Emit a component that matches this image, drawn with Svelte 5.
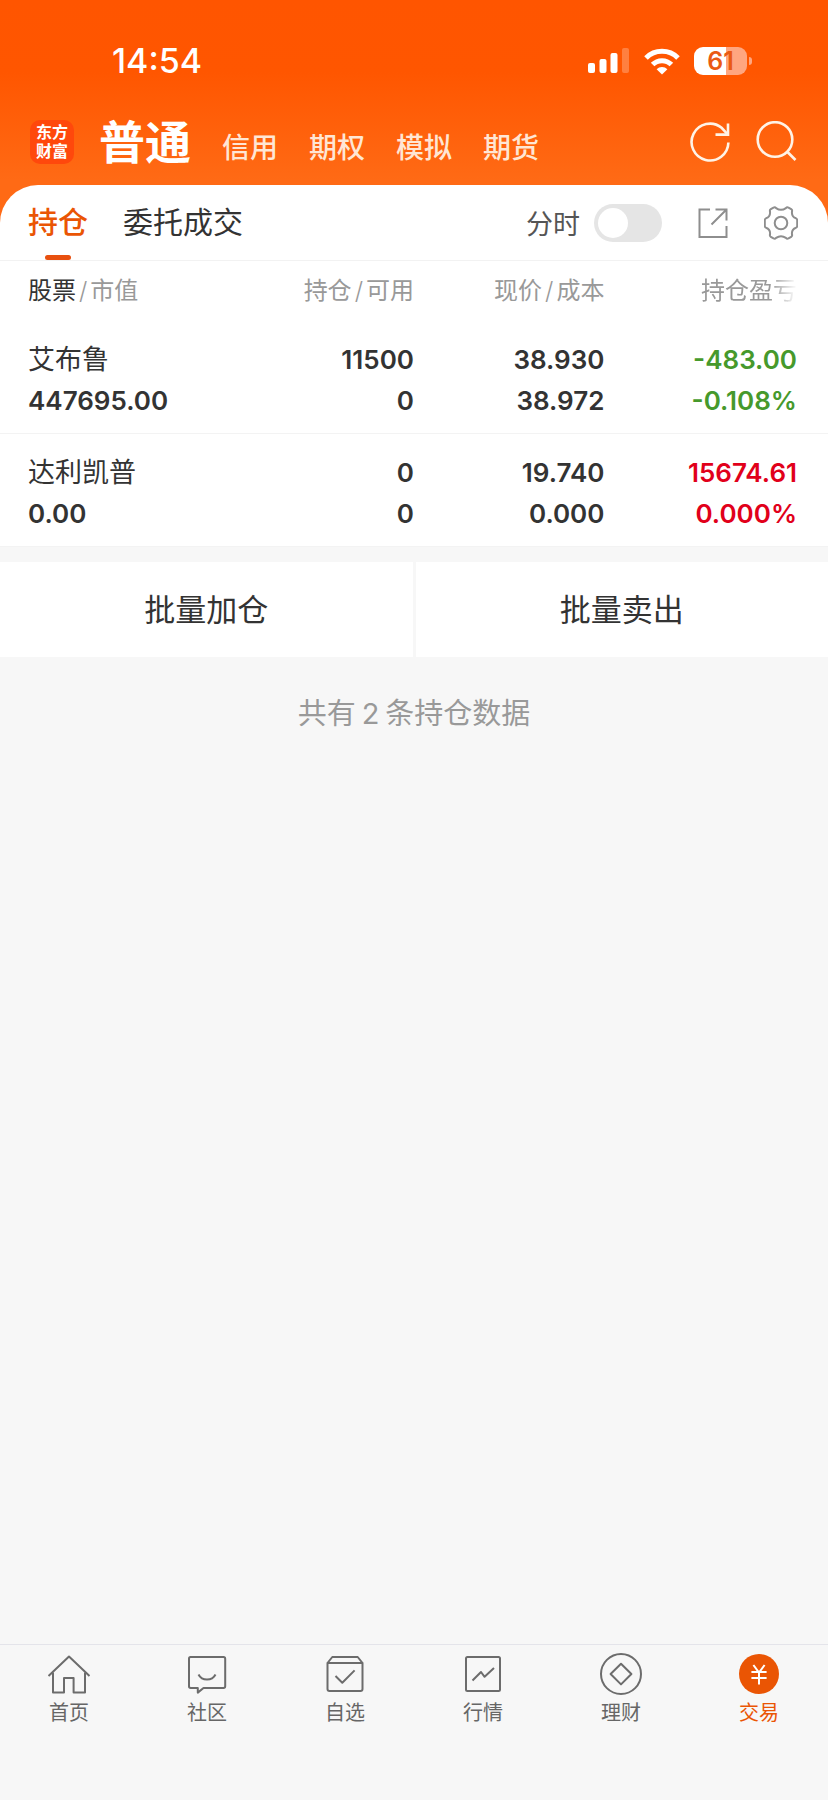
<script>
  const accounts = ['信用', '期权', '模拟', '期货'];

  const columns = [
    { first: '持仓', second: '可用' },
    { first: '现价', second: '成本' }
  ];

  const holdings = [
    {
      name: '艾布鲁',
      value: '447695.00',
      held: '11500',
      available: '0',
      price: '38.930',
      cost: '38.972',
      profit: '-483.00',
      rate: '-0.108%',
      trend: 'down'
    },
    {
      name: '达利凯普',
      value: '0.00',
      held: '0',
      available: '0',
      price: '19.740',
      cost: '0.000',
      profit: '15674.61',
      rate: '0.000%',
      trend: 'up'
    }
  ];

  const battery = 61;
  let intraday = $state(false);
</script>

<div class="app">
  <header class="top">
    <div class="status">
      <time>14:54</time>
      <div class="signals">
        <svg class="cell" viewBox="0 0 42 26" aria-hidden="true">
          <rect x="0" y="15" width="7" height="10" rx="2" />
          <rect x="11.5" y="11" width="7" height="14" rx="2" />
          <rect x="22.5" y="5" width="7" height="20" rx="2" />
          <rect x="34" y="0" width="7" height="25" rx="2" opacity="0.25" />
        </svg>
        <svg class="wifi" viewBox="0 0 36 27" aria-hidden="true">
          <path d="M18 26.5 L12.6 21.2 A7.6 7.6 0 0 1 23.4 21.2 Z" />
          <path class="arc" d="M8.6 16.6 A13.2 13.2 0 0 1 27.4 16.6" />
          <path class="arc" d="M2 10 A22.6 22.6 0 0 1 34 10" />
        </svg>
        <div class="battery">
          <span class="charge" style:--level="{battery}%">{battery}</span>
          <span class="nub"></span>
        </div>
      </div>
    </div>

    <div class="bar">
      <span class="logo">东方<br />财富</span>
      <nav class="accounts" aria-label="账户">
        <button class="current" type="button">普通</button>
        {#each accounts as account}
          <button type="button">{account}</button>
        {/each}
      </nav>
      <button class="tool" type="button" aria-label="刷新">
        <svg viewBox="0 0 42 42">
          <path d="M39.4 21.5 A18.4 18.4 0 1 1 32.6 6.8 L38 12.6" />
          <path d="M39 2.5 V13.6 H26.5" />
        </svg>
      </button>
      <button class="tool" type="button" aria-label="搜索">
        <svg viewBox="0 0 42 42">
          <circle cx="19" cy="18.5" r="17.3" />
          <path d="M31 30.5 L39.5 39" />
        </svg>
      </button>
    </div>
  </header>

  <main>
    <div class="sheet">
      <div class="tabs">
        <button class="tab active" type="button">持仓</button>
        <button class="tab" type="button">委托成交</button>
        <label class="switch">
          <span>分时</span>
          <input type="checkbox" role="switch" bind:checked={intraday} />
        </label>
        <button class="action" type="button" aria-label="分享">
          <svg viewBox="0 0 34 34">
            <path d="M14 3.5 H3.5 V31 H30.5 V20" />
            <path d="M19.5 3.5 H30.5 V14.5 M30.5 3.5 L15.5 18.5" />
          </svg>
        </button>
        <button class="action" type="button" aria-label="设置">
          <svg viewBox="0 0 34 34">
            <path
              d="M9.5 1.6 Q11 .8 12.1 2.1 Q17 5.6 21.9 2.1 Q23 .8 24.5 1.6 L27.2 3.2 Q28.5 4 28 5.6 Q27.4 10.7 32 12.3 Q33.2 12.8 33.2 14 V20 Q33.2 21.2 32 21.7 Q27.4 23.3 28 28.4 Q28.5 30 27.2 30.8 L24.5 32.4 Q23 33.2 21.9 31.9 Q17 28.4 12.1 31.9 Q11 33.2 9.5 32.4 L6.8 30.8 Q5.5 30 6 28.4 Q6.6 23.3 2 21.7 Q.8 21.2 .8 20 V14 Q.8 12.8 2 12.3 Q6.6 10.7 6 5.6 Q5.5 4 6.8 3.2 Z"
            />
            <circle cx="17" cy="17" r="6.3" />
          </svg>
        </button>
      </div>

      <table>
        <colgroup>
          <col class="wide" />
          <col />
          <col />
          <col class="wide" />
        </colgroup>
        <thead>
          <tr>
            <th scope="col"><b>股票</b><i>/</i>市值</th>
            {#each columns as column}
              <th scope="col">{column.first}<i>/</i>{column.second}</th>
            {/each}
            <th scope="col"><span class="fade">持仓盈亏</span></th>
          </tr>
        </thead>
        <tbody>
          {#each holdings as row}
            <tr>
              <td><span class="name">{row.name}</span><span>{row.value}</span></td>
              <td><span>{row.held}</span><span>{row.available}</span></td>
              <td><span>{row.price}</span><span>{row.cost}</span></td>
              <td class={row.trend}><span>{row.profit}</span><span>{row.rate}</span></td>
            </tr>
          {/each}
        </tbody>
      </table>
    </div>

    <div class="batch">
      <button type="button">批量加仓</button>
      <button type="button">批量卖出</button>
    </div>

    <p class="count">共有<span>{holdings.length}</span>条持仓数据</p>
  </main>

  <nav class="dock" aria-label="主导航">
    <a href="#home">
      <svg viewBox="0 0 44 44">
        <path d="M1.5 22 L22 2.6 L42.5 22" />
        <path d="M6 18.5 V38.6 H17 V24 H26.6 V38.6 H38 V18.5" />
      </svg>
      首页
    </a>
    <a href="#community">
      <svg viewBox="0 0 44 44">
        <path d="M5.5 3 H38.5 Q40.2 3 40.2 4.7 V32.3 Q40.2 34 38.5 34 H18.5 L12.8 38.6 V34 H5.7 Q4 34 4 32.3 V4.7 Q4 3 5.5 3 Z" />
        <path d="M13.5 20.5 C17 27.3 27 27.3 30.5 20.5" />
      </svg>
      社区
    </a>
    <a href="#watchlist">
      <svg viewBox="0 0 44 44">
        <path d="M4.5 9 H39.5 V35 Q39.5 37 37.5 37 H6.5 Q4.5 37 4.5 35 Z" />
        <path d="M4.5 9 L9.3 3 H34.7 L39.5 9" />
        <path d="M12.5 22 L19.3 28.8 L31.6 16.4" />
      </svg>
      自选
    </a>
    <a href="#market">
      <svg viewBox="0 0 44 44">
        <rect x="5" y="3" width="34" height="34" rx="1.5" />
        <path d="M11.5 26.5 L20 18 L23.6 22.8 L33 14" />
      </svg>
      行情
    </a>
    <a href="#wealth">
      <svg viewBox="0 0 44 44">
        <circle cx="22" cy="20" r="20" />
        <path d="M22 9.8 L32.4 20 L22 30.4 L11.6 20 Z" />
      </svg>
      理财
    </a>
    <a class="active" href="#trade" aria-current="page">
      <svg viewBox="0 0 44 44">
        <circle class="coin" cx="22" cy="20" r="20" />
        <path class="yen" d="M16.4 11 L22 18.6 L27.6 11 M22 18.6 V30.6 M14.4 18 H29.6 M14.4 24 H29.6" />
      </svg>
      交易
    </a>
  </nav>
</div>

<style>
  :global(body) {
    margin: 0;
    background: #f7f7f7;
  }

  .app {
    display: flex;
    flex-direction: column;
    min-height: 100vh;
    font-family: Inter, 'Noto Sans CJK SC', sans-serif;
    color: #333;
    background: #f7f7f7;
  }

  button {
    margin: 0;
    padding: 0;
    border: 0;
    background: none;
    font: inherit;
    color: inherit;
  }

  svg {
    display: block;
    fill: none;
  }

  .top {
    padding: 40px 30px 51px;
    color: #fff;
    background: linear-gradient(#ff5500 0, #ff5600 72px, #ff6a15 180px);
  }

  .status {
    display: flex;
    align-items: center;
    justify-content: space-between;
    height: 42px;
    padding: 0 46px 0 82px;
  }

  .status time {
    font-size: 34px;
    font-weight: 500;
    line-height: 42px;
  }

  .signals {
    display: flex;
    align-items: center;
    gap: 14px;
  }

  .cell {
    width: 42px;
    height: 26px;
    fill: #fff;
  }

  .wifi {
    width: 36px;
    height: 27px;
    fill: #fff;
  }

  .arc {
    fill: none;
    stroke: #fff;
    stroke-width: 5;
  }

  .battery {
    display: flex;
    align-items: center;
    gap: 2px;
  }

  .charge {
    width: 53px;
    border-radius: 9px;
    font-size: 25px;
    font-weight: 600;
    line-height: 28px;
    text-align: center;
    color: #ea5a14;
    background: linear-gradient(90deg, #fff var(--level), #ffa680 var(--level));
  }

  .nub {
    width: 3px;
    height: 8px;
    border-radius: 0 4px 4px 0;
    background: #ffa680;
  }

  .bar {
    display: flex;
    align-items: center;
    height: 60px;
    margin-top: 30px;
  }

  .logo {
    width: 44px;
    height: 38px;
    padding: 3px 0;
    border-radius: 10px;
    background: #ff480c;
    font-size: 16px;
    font-weight: 700;
    line-height: 19px;
    text-align: center;
  }

  .accounts {
    display: flex;
    flex: 1;
    align-items: flex-end;
    gap: 31px;
    margin-left: 25px;
  }

  .accounts button {
    font-size: 28px;
    font-weight: 500;
    line-height: 48px;
    color: #ffe6d4;
  }

  .accounts .current {
    font-size: 46px;
    font-weight: 700;
    line-height: 60px;
    color: #fff;
  }

  .tool svg {
    width: 42px;
    height: 42px;
    stroke: #fff3e6;
    stroke-width: 2.6;
  }

  .tool + .tool {
    margin-left: 25px;
  }

  .sheet {
    margin-top: -38px;
    border-radius: 38px 38px 0 0;
    background: #fff;
  }

  .tabs {
    display: flex;
    align-items: center;
    height: 75px;
    padding: 0 30px 0 28px;
    border-bottom: 1px solid #f2f2f2;
  }

  .tab {
    position: relative;
    font-size: 30px;
    line-height: 75px;
  }

  .tab + .tab {
    margin-left: 35px;
  }

  .tab.active {
    font-weight: 500;
    color: #ea5504;
  }

  .tab.active::after {
    content: '';
    position: absolute;
    bottom: 0;
    left: 50%;
    width: 26px;
    height: 5px;
    margin-left: -13px;
    border-radius: 3px;
    background: #e8500f;
  }

  .switch {
    display: flex;
    align-items: center;
    gap: 14px;
    margin-left: auto;
    font-size: 27px;
    color: #555;
  }

  .switch input {
    appearance: none;
    width: 68px;
    height: 38px;
    margin: 0;
    padding: 4px;
    border-radius: 19px;
    background: #e5e5e5;
  }

  .switch input::before {
    content: '';
    display: block;
    width: 30px;
    height: 30px;
    border-radius: 50%;
    background: #fff;
  }

  .switch input:checked {
    background: #ea5504;
  }

  .switch input:checked::before {
    margin-left: 30px;
  }

  .action {
    margin-left: 34px;
  }

  .action svg {
    width: 34px;
    height: 34px;
    stroke: #8e8e8e;
    stroke-width: 2;
  }

  table {
    width: 100%;
    table-layout: fixed;
    border-collapse: collapse;
  }

  col {
    width: 23%;
  }

  .wide {
    width: 27%;
  }

  th,
  td {
    padding: 0;
    text-align: right;
  }

  th:first-child,
  td:first-child {
    padding-left: 28px;
    text-align: left;
  }

  th:last-child,
  td:last-child {
    padding-right: 31px;
  }

  th {
    height: 60px;
    font-size: 24px;
    font-weight: 400;
    line-height: 30px;
    white-space: nowrap;
    color: #999;
  }

  th b {
    font-weight: 400;
    color: #333;
  }

  th i {
    margin: 0 3px;
    font-style: normal;
    font-weight: 300;
  }

  .fade {
    mask-image: linear-gradient(90deg, #000 72%, transparent);
  }

  td {
    padding-top: 18px;
    padding-bottom: 12px;
    border-bottom: 1px solid #f3f3f3;
    font-size: 26px;
    font-weight: 600;
    line-height: 41px;
  }

  td span {
    display: block;
  }

  .name {
    font-size: 27px;
    font-weight: 400;
  }

  .down {
    color: #46992c;
  }

  .up {
    color: #e1001a;
  }

  .batch {
    display: flex;
    gap: 3px;
    margin-top: 15px;
  }

  .batch button {
    flex: 1;
    font-size: 31px;
    line-height: 95px;
    background: #fff;
  }

  .count {
    margin: 35px 0;
    font-size: 29px;
    line-height: 44px;
    text-align: center;
    color: #999;
  }

  .count span {
    margin: 0 6px;
  }

  .dock {
    display: flex;
    margin-top: auto;
    padding: 9px 0 72px;
    border-top: 1px solid #e4e4ea;
  }

  .dock a {
    display: flex;
    flex: 1;
    flex-direction: column;
    align-items: center;
    font-size: 20px;
    line-height: 30px;
    text-decoration: none;
    color: #666;
  }

  .dock svg {
    width: 44px;
    height: 44px;
    overflow: visible;
    stroke: #6c6c6c;
    stroke-width: 2;
    stroke-linejoin: round;
  }

  .dock .active {
    color: #ea5504;
  }

  .dock .coin {
    fill: #ea5504;
    stroke: none;
  }

  .dock .yen {
    stroke: #fff;
  }
</style>
